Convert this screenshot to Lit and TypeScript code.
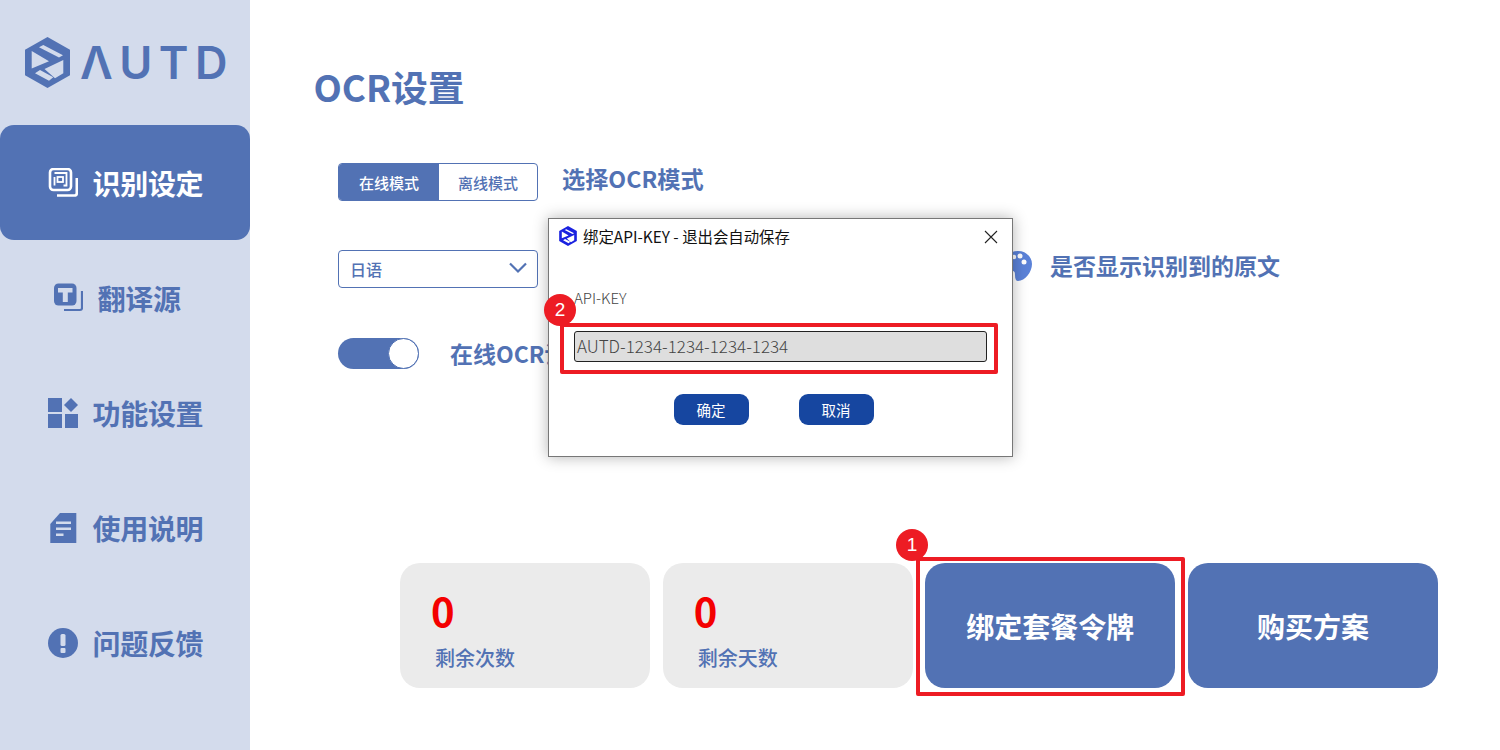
import { LitElement, html, css, svg } from "lit";
import { customElement } from "lit/decorators.js";

const logoMark = (cls: string) => html`<svg class=${cls} viewBox="0 0 45 51">
  <path fill="currentColor" fill-rule="evenodd" d="M22.500 0 45 12.800v25.400L22.500 51 0 38.200V12.800z
    M18.300 8 38 18.200 34 20.500 14 10.300z
    M6.700 14 24 24.200 6.700 31.500z
    M38.300 23V36.300L30 41.300 19.500 32z
    M15 33 28.300 40.300 24 43.700 10 36.300z"/>
</svg>`;

const icons: Record<string, unknown> = {
  scan: svg`<rect x="2" y="1" width="21" height="21" rx="3.500" fill="none" stroke="currentColor" stroke-width="2.600"/>
    <path d="M6.500 5h12v12.500h-3M6.500 9v8.500" fill="none" stroke="currentColor" stroke-width="1.800"/>
    <rect x="9.500" y="9" width="5.500" height="5" fill="none" stroke="currentColor" stroke-width="1.800"/>
    <path d="M28.800 10v15a2.500 2.500 0 0 1-2.500 2.500H9" fill="none" stroke="currentColor" stroke-width="2.600"/>`,
  text: svg`<rect x="1" y="0.500" width="22.500" height="22" rx="4.500" fill="currentColor"/>
    <path d="M5 5h14.500v4.500h-4.700V19h-5V9.500H5z" fill="#d3dbec"/>
    <path d="M29 8v17a2 2 0 0 1-2 2H11" fill="none" stroke="currentColor" stroke-width="2.200"/>`,
  grid: svg`<rect x="0" y="0" width="14" height="14" fill="currentColor"/>
    <rect x="0" y="16" width="14" height="14" fill="currentColor"/>
    <rect x="17" y="16" width="13" height="14" fill="currentColor"/>
    <path d="M23 0l7 7-7 7-7-7z" fill="currentColor"/>`,
  doc: svg`<path d="M12 0h16.300v30H2.300V11z" fill="currentColor"/>
    <path d="M8 8.500h15V11H8zM8 14.500h15V17H8zM8 20.500h7.500V23H8z" fill="#d3dbec"/>`,
  alert: svg`<circle cx="15" cy="15" r="15" fill="currentColor"/>
    <rect x="12.500" y="6" width="5" height="12" rx="1.500" fill="#d3dbec"/>
    <rect x="12.500" y="20" width="5" height="5" rx="1" fill="#d3dbec"/>`,
};

const nav = [
  { label: "识别设定", icon: "scan", active: true, shift: false },
  { label: "翻译源", icon: "text", active: false, shift: true },
  { label: "功能设置", icon: "grid", active: false, shift: false },
  { label: "使用说明", icon: "doc", active: false, shift: false },
  { label: "问题反馈", icon: "alert", active: false, shift: false },
];

@customElement("app-root")
export class AppRoot extends LitElement {
  static styles = css`
    :host {
      display: flex;
      width: 1500px;
      height: 750px;
      overflow: hidden;
      background: #fff;
      color: #5272b4;
      font-family: "Noto Sans CJK SC", "Noto Sans", sans-serif;
    }
    * { box-sizing: border-box; }
    .side {
      flex: 0 0 250px;
      background: #d3dbec;
      display: flex;
      flex-direction: column;
    }
    .brand {
      height: 125px;
      padding: 37px 0 0 25px;
      display: flex;
      align-items: flex-start;
      gap: 10px;
    }
    .mark { width: 45px; height: 51px; flex: none; }
    .word {
      font-family: Inter, sans-serif;
      font-weight: 600;
      font-size: 45px;
      line-height: 51px;
      letter-spacing: 6.500px;
    }
    .item {
      height: 115px;
      display: flex;
      align-items: center;
      padding-left: 48px;
      gap: 14.500px;
      font-size: 28px;
      font-weight: 700;
      border-radius: 14px;
      letter-spacing: -0.3px;
    }
    .item.active { background: #5272b4; color: #fff; }
    .item.shift { padding-left: 53px; }
    .item svg { width: 30px; height: 30px; flex: none; }
    .main {
      flex: 1;
      position: relative;
      padding: 59px 62px 0 63.500px;
    }
    h1 {
      margin: 0;
      font-size: 36.800px;
      line-height: 54px;
      font-weight: 700;
    }
    .rows { padding-left: 24.500px; margin-top: 50px; }
    .row { display: flex; align-items: center; }
    .row.r1 { height: 38px; }
    .row.r2 { height: 38px; margin-top: 49px; }
    .row.r3 { height: 31px; margin-top: 50px; }
    .seg {
      width: 200px;
      height: 38px;
      display: flex;
      border: 1px solid #5272b4;
      border-radius: 4px;
      overflow: hidden;
      font-size: 15px;
      font-weight: 500;
    }
    .seg span {
      display: flex;
      align-items: center;
      justify-content: center;
    }
    .seg .on { flex: 0 0 100px; background: #5272b4; color: #fff; }
    .seg .off { flex: 1; }
    .lbl { font-size: 23px; font-weight: 700; }
    .r1 .lbl { margin-left: 24px; margin-top: -9px; font-size: 23.200px; }
    .select {
      width: 200px;
      height: 38px;
      border: 1px solid #5272b4;
      border-radius: 4px;
      display: flex;
      align-items: center;
      justify-content: space-between;
      padding: 0 9px 0 11px;
      font-size: 16px;
      font-weight: 500;
    }
    .select svg { width: 20px; height: 12px; margin-top: -3px; }
    .palette { width: 30px; height: 30px; margin-left: 465px; flex: none; color: #5b82d8; margin-top: -7px; }
    .r2 .lbl { margin-left: 17px; margin-top: -9px; }
    .toggle {
      width: 81px;
      height: 31px;
      border-radius: 16px;
      background: #5272b4;
      display: flex;
      justify-content: flex-end;
      flex: none;
    }
    .knob {
      width: 31px;
      height: 31px;
      border-radius: 50%;
      background: #fff;
      border: 1px solid #5272b4;
    }
    .r3 .lbl { margin-left: 31px; margin-top: -2px; }
    .cards {
      position: absolute;
      left: 150px;
      top: 563px;
      display: flex;
      gap: 12.660px;
    }
    .card {
      width: 250px;
      height: 125px;
      border-radius: 20px;
      background: #ebebeb;
      padding: 19px 0 0 31px;
    }
    .card b {
      display: block;
      color: #f40000;
      font-size: 40px;
      line-height: 56px;
      font-weight: 700;
    }
    .card span {
      display: block;
      font-size: 20px;
      line-height: 30px;
      font-weight: 500;
      margin: 5px 0 0 4px;
    }
    .card.cta {
      background: #5272b4;
      color: #fff;
      padding: 0;
      display: flex;
      align-items: center;
      justify-content: center;
      font-size: 28px;
      font-weight: 700;
    }
    .modal {
      position: absolute;
      left: 298px;
      top: 218px;
      width: 465px;
      height: 239px;
      background: #fff;
      border: 1px solid #777;
      box-shadow: 0 0 14px rgba(0, 0, 0, 0.3);
      color: #222;
    }
    .mhead {
      display: flex;
      align-items: center;
      height: 34px;
      padding: 0 14px 0 10px;
      font-size: 15.400px;
      gap: 6px;
    }
    .mhead .tiny { width: 18px; height: 20px; color: #1a22e0; flex: none; }
    .mhead span { flex: 1; color: #111; }
    .mhead svg.x { width: 14px; height: 14px; flex: none; margin-top: 2px; }
    .mbody { padding: 31px 25px 0 25px; }
    .mlabel { font-size: 15px; line-height: 28px; font-weight: 300; color: #444; }
    .input {
      margin-top: 19px;
      height: 31px;
      width: 413px;
      background: #dedede;
      border: 1px solid #222;
      border-radius: 3px;
      padding-left: 2px;
      font-size: 17px;
      line-height: 28px;
      font-weight: 300;
      color: #444;
    }
    .actions {
      display: flex;
      justify-content: center;
      gap: 50px;
      margin-top: 32px;
      padding-right: 14px;
    }
    .actions button {
      width: 75px;
      height: 31px;
      border: 0;
      padding: 0;
      border-radius: 9px;
      background: #1646a0;
      color: #fff;
      font: 400 14.500px "Noto Sans CJK SC", sans-serif;
    }
    .box {
      position: absolute;
      border: 4px solid #ed1c24;
      border-radius: 2px;
    }
    .box.b1 { left: 666px; top: 557px; width: 269px; height: 139px; }
    .box.b2 { left: 310px; top: 323px; width: 438px; height: 51px; }
    .dot {
      position: absolute;
      width: 32px;
      height: 32px;
      border-radius: 50%;
      background: #ed1c24;
      color: #fff;
      display: flex;
      align-items: center;
      justify-content: center;
      font: 400 19px "Liberation Sans", sans-serif;
    }
    .dot.d1 { left: 646px; top: 529px; }
    .dot.d2 { left: 294px; top: 294px; }
  `;

  render() {
    return html`
      <aside class="side">
        <div class="brand">${logoMark("mark")}<div class="word">ΛUTD</div></div>
        ${nav.map(
          (n) => html`<div class="item ${n.active ? "active" : ""} ${n.shift ? "shift" : ""}">
            <svg viewBox="0 0 30 30">${icons[n.icon]}</svg><span>${n.label}</span>
          </div>`
        )}
      </aside>
      <main class="main">
        <h1>OCR设置</h1>
        <div class="rows">
          <div class="row r1">
            <div class="seg"><span class="on">在线模式</span><span class="off">离线模式</span></div>
            <div class="lbl">选择OCR模式</div>
          </div>
          <div class="row r2">
            <div class="select">日语
              <svg viewBox="0 0 20 12" fill="none" stroke="currentColor" stroke-width="2.200"><path d="M2 1.500l8 8 8-8"/></svg>
            </div>
            <svg class="palette" viewBox="0 0 30 30">
              <path d="M15 0C7 0 1 6 1 13c0 5 4 7 8 7 3 0 3 2 3 4 0 4 1 6 3 6 7 0 14-9 14-17C29 6 23 0 15 0z" fill="currentColor"/>
              <circle cx="11" cy="6" r="2.200" fill="#fff"/><circle cx="17" cy="5" r="2.500" fill="#fff"/><circle cx="21" cy="11" r="2.500" fill="#fff"/>
            </svg>
            <div class="lbl">是否显示识别到的原文</div>
          </div>
          <div class="row r3">
            <div class="toggle"><div class="knob"></div></div>
            <div class="lbl">在线OCR设置</div>
          </div>
        </div>
        <div class="cards">
          <div class="card"><b>0</b><span>剩余次数</span></div>
          <div class="card"><b>0</b><span>剩余天数</span></div>
          <div class="card cta">绑定套餐令牌</div>
          <div class="card cta">购买方案</div>
        </div>
        <div class="modal">
          <div class="mhead">
            ${logoMark("tiny")}
            <span>绑定API-KEY - 退出会自动保存</span>
            <svg class="x" viewBox="0 0 14 14" fill="none" stroke="#222" stroke-width="1.100"><path d="M1 1l12 12M13 1L1 13"/></svg>
          </div>
          <div class="mbody">
            <div class="mlabel">API-KEY</div>
            <div class="input">AUTD-1234-1234-1234-1234</div>
            <div class="actions"><button>确定</button><button>取消</button></div>
          </div>
        </div>
        <div class="box b1"></div>
        <div class="box b2"></div>
        <div class="dot d1">1</div>
        <div class="dot d2">2</div>
      </main>
    `;
  }
}
